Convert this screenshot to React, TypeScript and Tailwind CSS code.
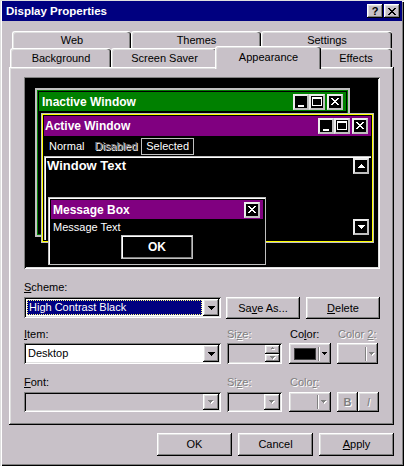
import React from "react";

const RAISED =
  "shadow-[inset_-1px_-1px_0_#000,inset_1px_1px_0_#fff,inset_-2px_-2px_0_#808080,inset_2px_2px_0_#dfdfdf]";
const SUNKEN =
  "shadow-[inset_1px_1px_0_#808080,inset_-1px_-1px_0_#fff,inset_2px_2px_0_#000,inset_-2px_-2px_0_#dfdfdf]";
const DIS = "text-[#808080] [text-shadow:1px_1px_0_#fff]";
const BG = "bg-[#c8c1c8]";
const TAB =
  "h-full bg-[#c8c1c8] border-t border-l border-white rounded-tl-[3px] rounded-tr-[3px] shadow-[inset_-1px_0_0_#000,inset_-2px_0_0_#808080,inset_1px_1px_0_#dfdfdf] flex items-center justify-center";
const PBTN =
  "w-[16px] h-[16px] bg-black border-2 border-[#c0c0c0] border-t-[#ececec] border-l-[#ececec] flex items-center justify-center";

const XPATH =
  "M0 0h2v1H0zM6 0h2v1H6zM1 1h2v1H1zM5 1h2v1H5zM2 2h4v1H2zM3 3h2v1H3zM2 4h4v1H2zM1 5h2v1H1zM5 5h2v1H5zM0 6h2v1H0zM6 6h2v1H6z";

function Tri({ color = "#000", up = false }: { color?: string; up?: boolean }) {
  return (
    <svg width="7" height="4" viewBox="0 0 7 4" className="block">
      <path
        d={
          up
            ? "M3 0h1v1H3zM2 1h3v1H2zM1 2h5v1H1zM0 3h7v1H0z"
            : "M0 0h7v1H0zM1 1h5v1H1zM2 2h3v1H2zM3 3h1v1H3z"
        }
        fill={color}
      />
    </svg>
  );
}

function SmallTri({ color = "#000", up = false, shadow = false }: { color?: string; up?: boolean; shadow?: boolean }) {
  return (
    <svg width="6" height="4" viewBox="0 0 6 4" className="block">
      {shadow && (
        <path
          d={up ? "M3 1h1v1H3zM2 2h3v1H2z" : "M1 1h5v1H1zM2 2h3v1H2zM3 3h1v1H3z"}
          fill="#fff"
        />
      )}
      <path
        d={up ? "M2 0h1v1H2zM1 1h3v1H1z" : "M0 0h5v1H0zM1 1h3v1H1zM2 2h1v1H2z"}
        fill={color}
      />
    </svg>
  );
}

function ArrowBtn({ disabled = false }: { disabled?: boolean }) {
  return (
    <div className={`w-[16px] h-full ${BG} ${RAISED} flex items-center justify-center shrink-0`}>
      {disabled ? <SmallTri color="#808080" shadow /> : <Tri />}
    </div>
  );
}

function PBtn({ kind, className = "" }: { kind: "min" | "max" | "close"; className?: string }) {
  return (
    <div className={`${PBTN} ${className}`}>
      <svg width="12" height="12" viewBox="0 0 12 12" className="block">
        {kind === "min" && <path d="M3 9h6v2H3z" fill="#fff" />}
        {kind === "max" && <path d="M1 1h10v2H1zM1 3h1v7H1zM10 3h1v7h-1zM1 9h10v1H1z" fill="#fff" />}
        {kind === "close" && <path d={XPATH} fill="#fff" transform="translate(2 2)" />}
      </svg>
    </div>
  );
}

function ScrollBtn({ up }: { up: boolean }) {
  return (
    <div className={PBTN}>
      <Tri color="#fff" up={up} />
    </div>
  );
}

function Btn({ className = "", children }: { className?: string; children: React.ReactNode }) {
  return (
    <div className={`${BG} ${RAISED} flex items-center justify-center ${className}`}>{children}</div>
  );
}

function Preview() {
  return (
    <div className={`w-[356px] h-[192px] bg-black relative shrink-0 ${SUNKEN}`}>
      {/* Inactive window */}
      <div className="absolute left-[11px] top-[11px] w-[315px] h-[149px] border-2 border-[#c0c0c0] bg-black">
        <div className="h-full border border-[#008000] p-[1px]">
          <div className="h-[19px] bg-[#008000] flex items-center pl-[3px] pr-[3px]">
            <span className="flex-1 text-white font-bold text-[12px] leading-[14px]">Inactive Window</span>
            <PBtn kind="min" />
            <PBtn kind="max" />
            <PBtn kind="close" className="ml-[2px]" />
          </div>
        </div>
      </div>

      {/* Active window */}
      <div className="absolute left-[17px] top-[36px] w-[333px] h-[130px] border border-[#c0c0c0] bg-black">
        <div className="h-full border border-[#ffff00] p-[1px] flex flex-col">
          <div className="h-[20px] bg-[#800080] flex items-center pl-[1px] pr-[3px] shrink-0">
            <span className="flex-1 text-white font-bold text-[12px] leading-[14px]">Active Window</span>
            <PBtn kind="min" />
            <PBtn kind="max" />
            <PBtn kind="close" className="ml-[2px]" />
          </div>
          <div className="h-[20px] flex items-center text-white text-[11px] shrink-0">
            <span className="ml-[5px]">Normal</span>
            <span className={`ml-[10px] ${DIS} [text-shadow:1px_1px_0_#c0c0c0]`}>Disabled</span>
            <span className="ml-[4px] h-[17px] px-[4px] border border-[#c0c0c0] flex items-center">Selected</span>
          </div>
          <div className="flex-1 flex shadow-[inset_1px_1px_0_#c0c0c0,inset_2px_2px_0_#fff] pl-[3px] pt-[2px] pr-[2px] pb-[5px]">
            <span className="flex-1 text-white font-bold text-[13px] leading-[16px]">Window Text</span>
            <div className="flex flex-col justify-between">
              <ScrollBtn up />
              <ScrollBtn up={false} />
            </div>
          </div>
        </div>
      </div>

      {/* Message box */}
      <div className="absolute left-[24px] top-[120px] w-[218px] h-[68px] border border-[#c0c0c0] shadow-[inset_1px_1px_0_#fff] bg-black p-[2px] flex flex-col">
        <div className="h-[19px] bg-[#800080] flex items-center pl-[2px] pr-[3px] shrink-0">
          <span className="flex-1 text-white font-bold text-[12px] leading-[14px]">Message Box</span>
          <PBtn kind="close" />
        </div>
        <div className="h-[16px] text-white text-[11px] leading-[16px] pl-[2px] shrink-0">Message Text</div>
        <div className="mx-auto w-[72px] h-[24px] border border-[#c0c0c0] shadow-[inset_1px_1px_0_#fff,inset_-1px_-1px_0_#808080] bg-black flex items-center justify-center text-white font-bold text-[12px]">
          OK
        </div>
      </div>
    </div>
  );
}

export default function App() {
  return (
    <div
      className={`w-[404px] h-[466px] ${BG} flex flex-col font-['Liberation_Sans',Arial,sans-serif] text-[11px] leading-[13px] text-black overflow-hidden shadow-[inset_1px_1px_0_#dfdfdf,inset_2px_2px_0_#fff,inset_-1px_-1px_0_#000,inset_-2px_-2px_0_#808080]`}
    >
      {/* Title bar */}
      <div className="mt-[1px] mx-[2px] h-[20px] bg-[#000080] flex items-center pl-[4px] pr-[2px] shrink-0">
        <span className="flex-1 text-white font-bold text-[11.5px] leading-[14px]">Display Properties</span>
        <div className={`w-[16px] h-[14px] ${BG} ${RAISED} flex items-center justify-center font-bold text-[11px] leading-[11px]`}>
          ?
        </div>
        <div className={`ml-[1px] w-[16px] h-[14px] ${BG} ${RAISED} flex items-center justify-center`}>
          <svg width="8" height="7" viewBox="0 0 8 7" className="block">
            <path d={XPATH} fill="#000" />
          </svg>
        </div>
      </div>

      {/* Tabs back row */}
      <div className="mt-[10px] ml-[12px] w-[380px] h-[17px] flex shrink-0">
        <div className={`w-[119px] ${TAB}`}>Web</div>
        <div className={`w-[130px] ${TAB}`}>Themes</div>
        <div className={`w-[131px] ${TAB}`}>Settings</div>
      </div>
      {/* Tabs front row */}
      <div className="ml-[10px] w-[382px] h-[19px] flex shrink-0">
        <div className={`w-[101px] ${TAB}`}>Background</div>
        <div className={`w-[106px] ${TAB}`}>Screen Saver</div>
        <div className="w-[102px] relative">
          <div
            className={`absolute -left-[2px] -right-[2px] -top-[2px] -bottom-[2px] z-10 ${BG} border-t border-l border-white rounded-tl-[3px] rounded-tr-[3px] shadow-[inset_-1px_0_0_#000,inset_-2px_0_0_#808080,inset_1px_1px_0_#dfdfdf] flex items-center justify-center pb-[2px]`}
          >
            Appearance
          </div>
        </div>
        <div className={`w-[73px] ${TAB}`}>Effects</div>
      </div>

      {/* Panel */}
      <div className={`ml-[9px] w-[385px] h-[358px] ${RAISED} pl-[15px] pt-[10px] flex flex-col shrink-0`}>
        <Preview />

        <div className="mt-[12px] h-[13px]">
          <u>S</u>cheme:
        </div>
        <div className="mt-[3px] h-[22px] flex items-start">
          <div className={`w-[197px] h-[21px] bg-white ${SUNKEN} p-[2px] flex`}>
            <div className="flex-1 p-[1px]">
              <div className="h-full bg-[#000080] border border-dotted border-[#ffff80] text-white pl-[1px] flex items-center">
                High Contrast Black
              </div>
            </div>
            <ArrowBtn />
          </div>
          <Btn className="ml-[5px] w-[74px] h-[22px]">
            Sa<u>v</u>e As...
          </Btn>
          <Btn className="ml-[6px] w-[74px] h-[22px]">
            <u>D</u>elete
          </Btn>
        </div>

        <div className="mt-[9px] h-[13px] flex">
          <div className="w-[197px]">
            <u>I</u>tem:
          </div>
          <div className={`ml-[6px] w-[55px] ${DIS}`}>
            Si<u>z</u>e:
          </div>
          <div className="ml-[8px] w-[41px]">
            Co<u>l</u>or:
          </div>
          <div className={`ml-[7px] ${DIS}`}>
            Color <u>2</u>:
          </div>
        </div>
        <div className="mt-[2px] h-[21px] flex">
          <div className={`w-[197px] h-full bg-white ${SUNKEN} p-[2px] flex`}>
            <div className="flex-1 pl-[2px] flex items-center">Desktop</div>
            <ArrowBtn />
          </div>
          <div className={`ml-[6px] w-[55px] h-full ${SUNKEN} p-[2px] flex justify-end`}>
            <div className="w-[15px] flex flex-col">
              <div className={`flex-1 ${BG} ${RAISED} flex items-center justify-center`}>
                <SmallTri color="#808080" up shadow />
              </div>
              <div className={`flex-1 ${BG} ${RAISED} flex items-center justify-center`}>
                <SmallTri color="#808080" shadow />
              </div>
            </div>
          </div>
          <div className={`ml-[7px] w-[42px] h-full ${BG} ${RAISED} flex items-center pl-[5px]`}>
            <div className="w-[22px] h-[12px] bg-black border border-[#404040]" />
            <div className="ml-[2px] w-[2px] h-[14px] border-l border-l-[#808080] border-r border-r-white" />
            <div className="ml-[2px]">
              <SmallTri />
            </div>
          </div>
          <div className={`ml-[6px] w-[41px] h-full ${BG} ${RAISED} flex items-center justify-end pr-[3px]`}>
            <div className="w-[2px] h-[14px] border-l border-l-[#808080] border-r border-r-white" />
            <div className="ml-[2px]">
              <SmallTri color="#808080" shadow />
            </div>
          </div>
        </div>

        <div className="mt-[12px] h-[13px] flex">
          <div className="w-[197px]">
            <u>F</u>ont:
          </div>
          <div className={`ml-[6px] w-[55px] ${DIS}`}>
            Si<u>z</u>e:
          </div>
          <div className={`ml-[8px] w-[41px] ${DIS}`}>
            Colo<u>r</u>:
          </div>
        </div>
        <div className="mt-[3px] h-[20px] flex">
          <div className={`w-[197px] h-full ${SUNKEN} p-[2px] flex`}>
            <div className="flex-1" />
            <ArrowBtn disabled />
          </div>
          <div className={`ml-[6px] w-[55px] h-full ${SUNKEN} p-[2px] flex`}>
            <div className="flex-1" />
            <ArrowBtn disabled />
          </div>
          <div className={`ml-[7px] w-[42px] h-full ${BG} ${RAISED} flex items-center justify-end pr-[4px]`}>
            <div className="w-[2px] h-[14px] border-l border-l-[#808080] border-r border-r-white" />
            <div className="ml-[2px]">
              <SmallTri color="#808080" shadow />
            </div>
          </div>
          <Btn className={`ml-[6px] w-[21px] h-full font-bold ${DIS}`}>B</Btn>
          <Btn className={`w-[21px] h-full italic ${DIS}`}>I</Btn>
        </div>
      </div>

      {/* Dialog buttons */}
      <div className="mt-[8px] flex justify-end pr-[10px] gap-[6px] shrink-0">
        <Btn className="w-[75px] h-[23px]">OK</Btn>
        <Btn className="w-[75px] h-[23px]">Cancel</Btn>
        <Btn className="w-[75px] h-[23px]">
          <u>A</u>pply
        </Btn>
      </div>
    </div>
  );
}
